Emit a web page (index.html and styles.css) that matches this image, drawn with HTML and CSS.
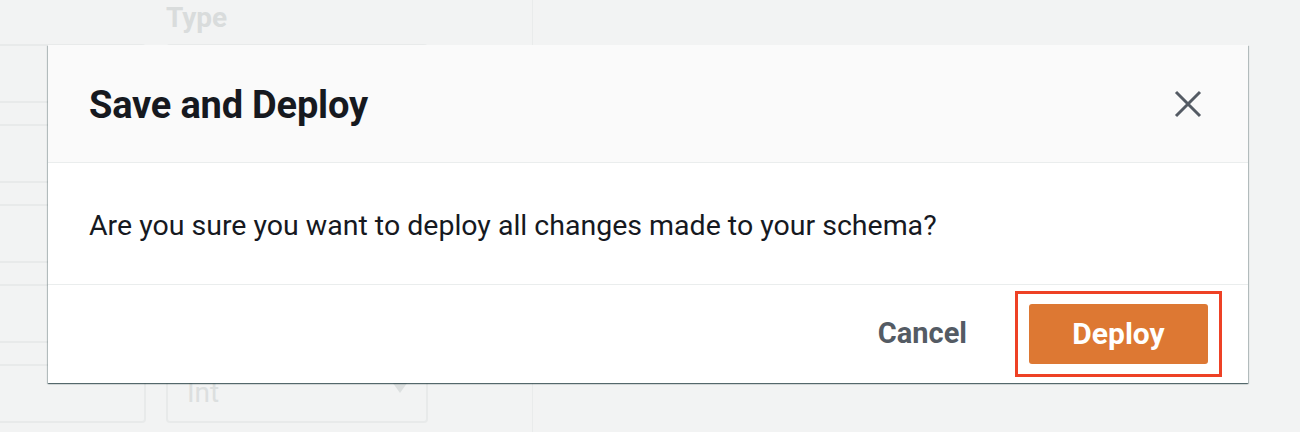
FILE: index.html
```html
<!DOCTYPE html>
<html lang="en">
<head>
<meta charset="utf-8">
<title>Save and Deploy</title>
<link rel="stylesheet" href="styles.css">
</head>
<body>
<div class="page">
  <div class="bg-table">
    <div class="bg-left">
      <div class="bg-head"></div>
      <div class="bg-rows">
        <div class="bg-input"></div>
        <div class="bg-input"></div>
        <div class="bg-input"></div>
        <div class="bg-input"></div>
        <div class="bg-input"></div>
      </div>
    </div>
    <div class="bg-type">
      <div class="bg-head"><span class="bg-th">Type</span></div>
      <div class="bg-rows">
        <div class="bg-select"></div>
        <div class="bg-select"></div>
        <div class="bg-select"></div>
        <div class="bg-select"></div>
        <div class="bg-select"><span class="bg-int">Int</span><span class="bg-caret"></span></div>
      </div>
    </div>
    <div class="bg-right"></div>
  </div>

  <div class="modal" role="dialog">
    <div class="modal-header">
      <h2 class="modal-title">Save and Deploy</h2>
      <button class="close" aria-label="Close">
        <svg width="28" height="28" viewBox="0 0 28 28"><path d="M2 2 L26 26 M26 2 L2 26" stroke="#545b64" stroke-width="3" fill="none"/></svg>
      </button>
    </div>
    <div class="modal-body">
      Are you sure you want to deploy all changes made to your schema?
    </div>
    <div class="modal-footer">
      <button class="btn-link">Cancel</button>
      <div class="highlight">
        <button class="btn-primary">Deploy</button>
      </div>
    </div>
  </div>
</div>
</body>
</html>
```

FILE: styles.css
```css
* { box-sizing: border-box; }
html, body {
  margin: 0;
  padding: 0;
}
body {
  background: #f2f3f3;
  font-family: Roboto, "Noto Sans", sans-serif;
  width: 1300px;
  height: 432px;
  overflow: hidden;
}
.page {
  position: relative;
  width: 1300px;
  height: 432px;
}

/* faded page underneath the modal */
.bg-table {
  display: flex;
  height: 432px;
}
.bg-left {
  width: 166px;
  margin-left: -20px;
}
.bg-type {
  width: 386px;
  padding-left: 20px;
  padding-right: 104px;
}
.bg-right {
  flex: 1;
  border-left: 1px solid #e9ebeb;
}
.bg-head {
  height: 45px;
  display: flex;
  align-items: center;
}
.bg-th {
  font-weight: 700;
  font-size: 28px;
  color: #d9dcdc;
  margin-top: -10px;
}
.bg-rows {
  display: flex;
  flex-direction: column;
  gap: 21px;
  margin-top: -1px;
}
.bg-input, .bg-select {
  height: 59px;
  border: 2px solid #e8eaea;
  border-radius: 4px;
  display: flex;
  align-items: center;
}
.bg-int {
  font-size: 28px;
  color: #dcdfdf;
  margin-left: 19px;
  flex: 1;
  margin-top: -2px;
}
.bg-caret {
  width: 0;
  height: 0;
  border-left: 10px solid transparent;
  border-right: 10px solid transparent;
  border-top: 14px solid #dcdfdf;
  margin-right: 16px;
  margin-top: -16px;
}

/* modal */
.modal {
  position: absolute;
  left: 48px;
  top: 45px;
  width: 1200px;
  background: #fff;
  box-shadow: 0 1px 1px 0 rgba(0, 28, 36, 0.45), 1px 1px 1px 0 rgba(0, 28, 36, 0.2), -1px 1px 1px 0 rgba(0, 28, 36, 0.2);
}
.modal-header {
  height: 118px;
  background: #fafafa;
  border-bottom: 1px solid #eaeded;
  display: flex;
  align-items: center;
  justify-content: space-between;
  padding: 0 46px 0 41px;
}
.modal-title {
  margin: 0;
  font-size: 38px;
  font-weight: 700;
  color: #16191f;
  letter-spacing: -0.2px;
  margin-top: 2px;
}
.close {
  border: 0;
  background: none;
  padding: 0;
  width: 28px;
  height: 28px;
  display: flex;
  cursor: pointer;
}
.modal-body {
  height: 122px;
  border-bottom: 1px solid #eaeded;
  display: flex;
  align-items: center;
  padding: 4px 41px 0;
  font-size: 28.5px;
  color: #16191f;
}
.modal-footer {
  height: 98px;
  display: flex;
  align-items: center;
  justify-content: flex-end;
  padding-right: 26px;
  gap: 48px;
}
.btn-link {
  border: 0;
  background: none;
  font-family: inherit;
  font-size: 29px;
  font-weight: 700;
  color: #545b64;
  padding: 0;
  margin-top: -2px;
}
.highlight {
  border: 3px solid #ee4125;
  padding: 10px 11px;
  margin-top: -1px;
}
.btn-primary {
  width: 179px;
  height: 60px;
  border: 0;
  border-radius: 3px;
  background: #dd7833;
  color: #fff;
  font-family: inherit;
  font-size: 30px;
  font-weight: 700;
  display: block;
}
```
